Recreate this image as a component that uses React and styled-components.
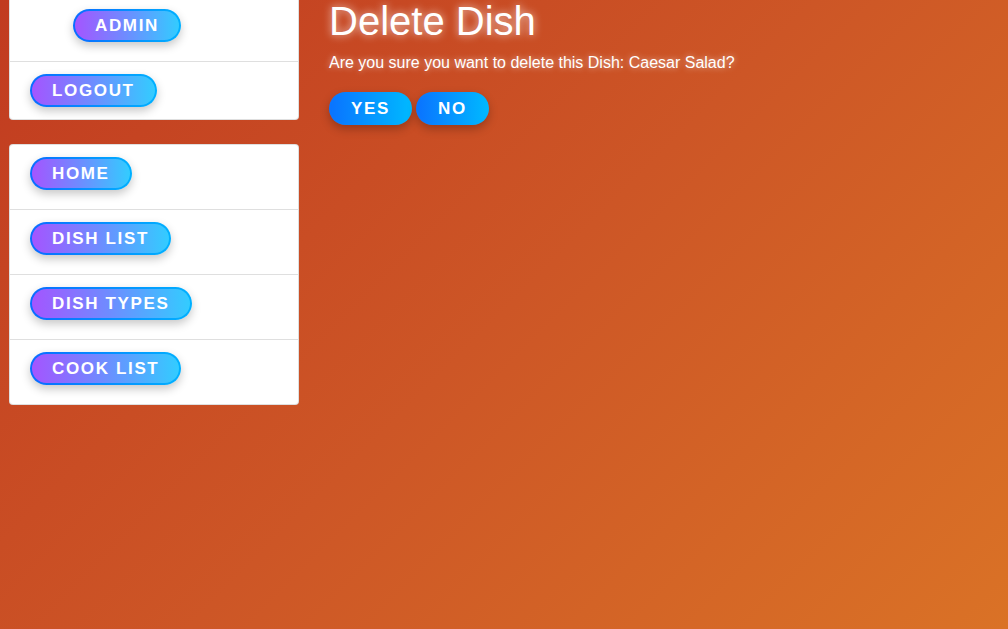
import React from 'react';
import styled, { createGlobalStyle } from 'styled-components';

const GlobalStyle = createGlobalStyle`
  html, body {
    margin: 0;
    padding: 0;
    min-height: 100%;
  }
  body {
    min-height: 629px;
    background: linear-gradient(135deg, #c13b20 0%, #cd5626 50%, #da7226 100%);
    font-family: 'Liberation Sans', Arial, sans-serif;
    overflow: hidden;
  }
`;

// Layout
const Page = styled.div`
  display: flex;
  gap: 30px;
  padding-left: 9px;
  margin-top: -4px;
`;

const Sidebar = styled.aside`
  display: flex;
  flex-direction: column;
  gap: 24px;
  width: 290px;
  flex-shrink: 0;
`;

const Panel = styled.ul`
  list-style: none;
  margin: 0;
  padding: 0;
  background: #fff;
  border: 1px solid rgba(0, 0, 0, 0.125);
  border-radius: 4px;
`;

const Item = styled.li`
  padding: 12px 20px ${p => p.$bottom || 19}px ${p => p.$indent || 20}px;
  & + & {
    border-top: 1px solid rgba(0, 0, 0, 0.125);
  }
`;

const PillButton = styled.button`
  display: inline-block;
  padding: 5px 20px;
  border: 2px solid transparent;
  border-radius: 999px;
  background:
    linear-gradient(90deg, #a455ff 0%, #6d8dff 50%, #33ccff 100%) padding-box,
    linear-gradient(90deg, #0a6cff 0%, #00b0ff 100%) border-box;
  color: #fff;
  font-family: 'Liberation Sans', Arial, sans-serif;
  font-weight: 700;
  font-size: 17px;
  line-height: 19px;
  letter-spacing: 1.65px;
  text-transform: uppercase;
  box-shadow: 0 4px 10px rgba(0, 0, 0, 0.22);
  cursor: pointer;
`;

const ConfirmButton = styled(PillButton)`
  background:
    linear-gradient(90deg, #0a74ff 0%, #00b8ff 100%) padding-box,
    linear-gradient(90deg, #0a74ff 0%, #00b8ff 100%) border-box;
  box-shadow: 0 4px 10px rgba(0, 0, 0, 0.25);
`;

const Main = styled.main`
  color: #fff;
`;

const Title = styled.h1`
  margin: 2px 0 0;
  font-size: 40px;
  font-weight: 400;
  line-height: 46px;
  text-shadow: 0 0 8px rgba(255, 255, 255, 0.75);
`;

const Message = styled.p`
  margin: 10px 0 20px;
  font-size: 16px;
  line-height: 18px;
  text-shadow: 0 0 6px rgba(255, 255, 255, 0.6);
`;

const Actions = styled.div`
  display: flex;
  gap: 4px;
`;

const App = () => {
  return (
    <>
      <GlobalStyle />
      <Page>
        <Sidebar>
          <Panel>
            <Item $indent={63}><PillButton>Admin</PillButton></Item>
            <Item $bottom={12}><PillButton>Logout</PillButton></Item>
          </Panel>
          <Panel>
            <Item><PillButton>Home</PillButton></Item>
            <Item><PillButton>Dish List</PillButton></Item>
            <Item><PillButton>Dish Types</PillButton></Item>
            <Item><PillButton>Cook List</PillButton></Item>
          </Panel>
        </Sidebar>
        <Main>
          <Title>Delete Dish</Title>
          <Message>Are you sure you want to delete this Dish: Caesar Salad?</Message>
          <Actions>
            <ConfirmButton>Yes</ConfirmButton>
            <ConfirmButton>No</ConfirmButton>
          </Actions>
        </Main>
      </Page>
    </>
  );
};

export default App;
